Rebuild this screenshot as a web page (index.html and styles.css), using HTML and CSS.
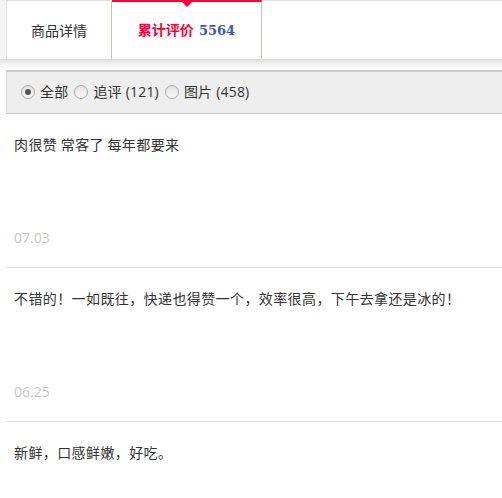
FILE: index.html
```html
<!DOCTYPE html>
<html lang="zh">
<head>
<meta charset="utf-8">
<link rel="stylesheet" href="styles.css">
</head>
<body>
<div class="header">
  <div class="tabs">
    <div class="tab">商品详情</div>
    <div class="tab active"><span class="label">累计评价</span> <span class="count">5564</span></div>
  </div>
</div>
<div class="shade"></div>
<div class="filter">
  <label class="opt"><span class="radio checked"></span>全部</label>
  <label class="opt"><span class="radio"></span>追评 (121)</label>
  <label class="opt"><span class="radio"></span>图片 (458)</label>
</div>
<div class="reviews">
  <div class="review">
    <div class="content">肉很赞 常客了 每年都要来</div>
    <div class="date">07.03</div>
  </div>
  <div class="review">
    <div class="content">不错的！一如既往，快递也得赞一个，效率很高，下午去拿还是冰的！</div>
    <div class="date">06.25</div>
  </div>
  <div class="review last">
    <div class="content">新鲜，口感鲜嫩，好吃。</div>
  </div>
</div>
</body>
</html>
```

FILE: styles.css
```css
html, body {
  margin: 0;
  padding: 0;
  background: #fff;
}
body {
  font-family: "Noto Sans CJK SC", "Noto Sans", sans-serif;
  color: #333;
  overflow: hidden;
}
.header {
  background: #f4f4f4;
  padding-left: 6px;
}
.tabs {
  display: flex;
  background: #fff;
  border-top: 1px solid #e2e2e2;
  border-left: 1px solid #e2e2e2;
  height: 58px;
}
.tab {
  width: 104px;
  line-height: 58px;
  text-align: center;
  font-size: 14px;
  color: #333;
  border-right: 1px solid #cbc1b8;
}
.tab.active {
  position: relative;
  width: 150px;
  box-sizing: border-box;
  border-top: 2px solid #ff0036;
  line-height: 54px;
  margin-top: -1px;
  height: 59px;
}
.tab.active::after {
  content: "";
  position: absolute;
  left: 50%;
  top: 0;
  margin-left: -5px;
  border-left: 5px solid transparent;
  border-right: 5px solid transparent;
  border-top: 5px solid #ff0036;
}
.label {
  color: #ff0036;
  font-weight: bold;
}
.count {
  color: #3d5aa8;
  font-weight: bold;
  font-family: "DejaVu Serif", serif;
  font-size: 13px;
  margin-left: 2px;
}
.shade {
  height: 11px;
  background: linear-gradient(#dcdcdc, #f3f3f3 50%, #fbfbfb);
}
.filter {
  margin-left: 6px;
  border-top: 2px solid #c9c9c9;
  border-bottom: 1px solid #c9c9c9;
  border-left: 1px solid #d6d6d6;
  background: #eeeeee;
  height: 41px;
  display: flex;
  align-items: center;
  padding-left: 14px;
  gap: 6px;
  font-family: "Open Sans", "Noto Sans CJK SC", sans-serif;
  font-size: 14px;
  line-height: 18px;
  letter-spacing: 0.2px;
}
.opt {
  display: flex;
  align-items: center;
  gap: 5px;
  color: #333;
  margin-top: -2px;
}
.radio {
  width: 12px;
  height: 12px;
  border-radius: 50%;
  border: 1px solid #a9a9a9;
  background: linear-gradient(#e4e4e4, #f8f8f8);
  display: flex;
  align-items: center;
  justify-content: center;
}
.radio.checked::before {
  content: "";
  width: 6px;
  height: 6px;
  border-radius: 50%;
  background: #555;
}
.reviews {
  margin-left: 6px;
}
.review {
  padding: 21px 8px 20px 8px;
  border-bottom: 1px solid #e3e3e3;
}
.content {
  font-size: 14px;
  line-height: 18px;
  letter-spacing: 0.4px;
  min-height: 94px;
  color: #333;
}
.date {
  font-family: "Open Sans", sans-serif;
  font-size: 14px;
  line-height: 18px;
  color: #c8c8c8;
}
```
